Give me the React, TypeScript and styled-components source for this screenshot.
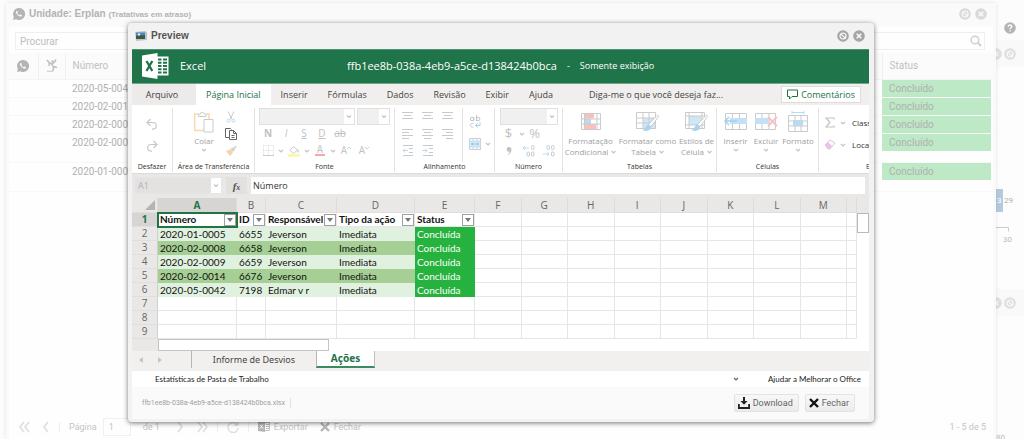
import React from "react";
import styled, { createGlobalStyle, css } from "styled-components";

const office = `"Open Sans", "Noto Sans", sans-serif`;
const calibri = `Lato, "Open Sans", sans-serif`;
const ui = `Roboto, "Liberation Sans", sans-serif`;

const GlobalStyle = createGlobalStyle`
  *, *::before, *::after { box-sizing: border-box; }
  html, body { margin: 0; padding: 0; }
  body { background: #fcfcfc; font-family: ${ui}; font-size: 10px; color: #b5b5b5; }
  button, input, select { font: inherit; color: inherit; margin: 0; padding: 0; border: 0; background: none; border-radius: 0; }
  svg { display: block; flex: none; }
`;

/* ---------- page behind the dialog ---------- */

const Page = styled.div`
  position: relative;
  display: flex;
  min-height: 100vh;
  padding-left: 6px;
  overflow: hidden;
`;

const BackWindow = styled.section`
  flex: 1;
  min-width: 0;
  display: flex;
  flex-direction: column;
  margin-top: 3px;
  padding: 0 3px;
  background: #fafafa;
  box-shadow: 0 0 4px rgba(0, 0, 0, 0.1);
  z-index: 1;
`;

const BackHeader = styled.header`
  display: flex;
  align-items: center;
  height: 24px;
  padding: 0 6px 2px 4px;
  gap: 4px;
`;

const BackTitle = styled.h2`
  margin: 0;
  flex: 1;
  font-size: 10px;
  line-height: 14px;
  font-weight: 700;
  font-family: "Liberation Sans", sans-serif;
  color: #b3b3b3;
  small { font-size: 8px; }
`;

const IconButton = styled.button`
  display: flex;
  align-items: center;
  justify-content: center;
`;

const BackBody = styled.div`
  flex: 1;
  display: flex;
  flex-direction: column;
  background: #fefefe;
`;

const SearchBox = styled.label`
  display: flex;
  align-items: center;
  height: 18px;
  margin: 5px 8px 3px 6px;
  padding: 0 2px 0 4px;
  border: 1px solid #efefef;
  input { flex: 1; min-width: 0; outline: 0; }
  input::placeholder { color: #bdbdbd; opacity: 1; }
`;

const BackTable = styled.table`
  width: 100%;
  table-layout: fixed;
  border-collapse: collapse;
  th {
    height: 26px;
    padding: 0 7px;
    background: #fbfbfb;
    border-left: 1px solid #f0f0f0;
    border-bottom: 1px solid #f4f4f4;
    font-weight: 400;
    text-align: left;
    color: #bfbfbf;
  }
  th:first-child { border-left: 0; }
`;

const IconHead = styled.div`
  display: flex;
  justify-content: center;
  margin: 0 -7px;
`;

const BackCell = styled.td<{ $tall?: boolean }>`
  height: ${(p) => (p.$tall ? 29 : 18)}px;
  padding: 0 2px 0 0;
  vertical-align: top;
  border-bottom: 1px solid #f8f8f8;
  line-height: 17px;
  color: #b0b0b0;
`;

const CellText = styled.div<{ $done?: boolean }>`
  padding-left: 7px;
  background: ${(p) => (p.$done ? "#bde9c6" : "transparent")};
`;

const Pager = styled.footer`
  display: flex;
  align-items: center;
  gap: 12px;
  height: 25px;
  margin-top: auto;
  padding: 0 7px 0 9px;
  font-size: 9px;
  color: #c4c4c4;
  input { width: 28px; height: 18px; padding-left: 5px; border: 1px solid #f0f0f0; margin: 0 0 0 6px; }
`;

const PagerLabel = styled.label`
  display: flex;
  align-items: center;
`;

const PagerTotal = styled.span`
  margin-right: 4px;
`;

const PagerRule = styled.span`
  width: 1px;
  height: 10px;
  margin: 0 -3px;
  background: #eee;
`;

const PagerAction = styled.button`
  display: flex;
  align-items: center;
  gap: 4px;
`;

const PagerCount = styled.span`
  margin-left: auto;
`;

const Rail = styled.aside`
  width: 28px;
  display: flex;
  flex-direction: column;
  background: #fdfdfd;
`;

const RailTop = styled.div`
  display: flex;
  align-items: flex-end;
  justify-content: center;
  height: 40px;
  padding-bottom: 6px;
  background: #fcfcfc;
`;

const RailHeader = styled.div`
  display: flex;
  align-items: center;
  gap: 2px;
  height: 27px;
  margin-left: -6px;
  background: #f9f9f9;
`;

const ChartEnd = styled.svg`
  margin-left: -2px;
`;

/* ---------- dialog ---------- */

const Overlay = styled.div`
  position: absolute;
  inset: 0;
  padding: 23px 150px 0 128px;
  z-index: 2;
`;

const Dialog = styled.section`
  background: #f2f2f2;
  border-radius: 4px;
  box-shadow: 0 1px 5px rgba(0, 0, 0, 0.55);
  padding: 0 5px 3px 4px;
`;

const DialogHeader = styled.header`
  display: flex;
  align-items: center;
  gap: 4px;
  height: 26px;
  padding: 0 4px 1px 3px;
  h1 { flex: 1; margin: 0; font-size: 10px; line-height: 14px; font-weight: 700; color: #555; font-family: "Liberation Sans", sans-serif; }
`;

const Workbook = styled.div`
  font-family: ${office};
  font-size: 9px;
  color: #444;
  overflow: hidden;
`;

const TitleBar = styled.div`
  display: flex;
  align-items: center;
  height: 35px;
  padding: 0 10px 2px;
  background: #1f7449;
  border-top: 1px solid #4c9170;
  border-bottom: 1px solid #6da88b;
  color: #fff;
  font-size: 11px;
  line-height: 16px;
  white-space: nowrap;
`;

const Brand = styled.div`
  display: flex;
  align-items: center;
  gap: 11px;
  width: 205px;
`;

const FileName = styled.span`
  font-weight: 500;
`;

const TitleNote = styled.span`
  padding-left: 10px;
  font-size: 9px;
  font-weight: 500;
`;

const Tabs = styled.nav`
  display: flex;
  height: 21px;
  background: #f1efed;
`;

const Tab = styled.button<{ $active?: boolean; $file?: boolean }>`
  padding: 0 10px;
  font-weight: 500;
  color: ${(p) => (p.$active ? "#217346" : "#444")};
  background: ${(p) => (p.$active ? "#fff" : "transparent")};
  white-space: nowrap;
  ${(p) => p.$file && css`width: 64px; padding: 0 4px 0 0; background: #ecebe9;`}
`;

const TellMe = styled.button`
  padding-left: 26px;
  white-space: nowrap;
`;

const CommentsButton = styled.button`
  display: flex;
  align-items: center;
  gap: 3px;
  height: 17px;
  margin: 2px 8px 0 auto;
  padding: 0 5px;
  background: #fff;
  border: 1px solid #dedddb;
  color: #217346;
  font-weight: 500;
`;

const Ribbon = styled.div`
  display: flex;
  height: 69px;
  padding: 3px 0 1px;
  background: #fff;
  border-bottom: 1px solid #dcdbda;
  overflow: hidden;
`;

const Group = styled.section<{ $w: number }>`
  flex: none;
  display: flex;
  flex-direction: column;
  width: ${(p) => p.$w}px;
  border-right: 1px solid #e3e3e3;
  &:last-child { border-right: 0; }
`;

const GroupBody = styled.div<{ $gap?: number; $start?: boolean }>`
  flex: 1;
  display: flex;
  justify-content: ${(p) => (p.$start ? "flex-start" : "center")};
  padding-left: ${(p) => (p.$start ? 2 : 0)}px;
  gap: ${(p) => p.$gap ?? 0}px;
`;

const GroupLabel = styled.h3`
  margin: 0;
  font-size: 7px;
  line-height: 10px;
  font-weight: 400;
  text-align: center;
  color: #333;
  white-space: nowrap;
`;

const Stack = styled.div<{ $gap?: number; $pad?: number }>`
  display: flex;
  flex-direction: column;
  gap: ${(p) => p.$gap ?? 0}px;
  padding-top: ${(p) => p.$pad ?? 0}px;
`;

const Line = styled.div<{ $gap?: number }>`
  display: flex;
  align-items: center;
  height: 17px;
  gap: ${(p) => p.$gap ?? 0}px;
`;

const Tool = styled.button<{ $w?: number; $big?: boolean }>`
  display: flex;
  align-items: center;
  justify-content: center;
  width: ${(p) => p.$w ?? 18}px;
  height: 17px;
  font-size: ${(p) => (p.$big ? 13 : 10)}px;
  line-height: 17px;
  color: #c2c2c2;
  white-space: nowrap;
`;

const BigTool = styled.button<{ $w: number }>`
  display: flex;
  flex-direction: column;
  align-items: center;
  width: ${(p) => p.$w}px;
  padding-top: 4px;
  color: #a0a0a0;
  font-size: 8px;
  line-height: 11px;
  white-space: nowrap;
`;

const BigIcon = styled.span`
  display: flex;
  align-items: center;
  height: 19px;
  margin-bottom: 4px;
`;

const Caption = styled.span`
  display: flex;
  align-items: center;
  gap: 3px;
  height: 11px;
`;

const Drop = styled.span<{ $w: number }>`
  position: relative;
  display: flex;
  width: ${(p) => p.$w}px;
  height: 17px;
  select {
    appearance: none;
    flex: 1;
    background: #f0f0f0;
    border: 1px solid #e0e0e0;
  }
  svg { position: absolute; right: 1px; top: 1px; background: #fff; }
`;

const InnerRule = styled.span`
  width: 1px;
  background: #e3e3e3;
  margin: 0 3px 0 4px;
`;

const EditText = styled.span`
  font-size: 8px;
  font-weight: 500;
  color: #333;
  white-space: nowrap;
`;

const EditLabel = styled(GroupLabel)`
  padding-left: 47px;
  text-align: left;
`;

const FormulaBar = styled.div`
  display: flex;
  gap: 4px;
  height: 24px;
  padding: 3px 4px 4px 2px;
  background: #e9e8e7;
  input { outline: 0; }
`;

const NameBox = styled.label`
  display: flex;
  width: 88px;
  background: #e3e2e1;
  border: 1px solid #e6e6e6;
  input { flex: 1; min-width: 0; padding-left: 3px; color: #b0b0b0; }
  svg { background: #fff; }
`;

const FxButton = styled.button`
  width: 21px;
  background: #e2e1e0;
  font-family: "Liberation Serif", serif;
  font-size: 11px;
  font-style: italic;
  font-weight: 700;
  color: #555;
  small { font-size: 8px; }
`;

const FormulaInput = styled.input`
  flex: 1;
  min-width: 0;
  background: #fff;
  padding-left: 2px;
  color: #333;
`;

const SheetArea = styled.div`
  display: flex;
  background: #fff;
`;

const SheetPane = styled.div`
  flex: 1;
  min-width: 0;
`;

const Sheet = styled.table`
  width: 100%;
  table-layout: fixed;
  border-collapse: separate;
  border-spacing: 0;
  font-family: ${calibri};
  font-size: 10px;
  line-height: 11px;
  color: #111;
`;

const ColHead = styled.th<{ $on?: boolean }>`
  height: 15px;
  padding: 0;
  background: ${(p) => (p.$on ? "#d6d5d3" : "#e9e8e7")};
  border-right: 1px solid #dddcdb;
  border-bottom: 1px solid ${(p) => (p.$on ? "#217346" : "#e0dfde")};
  font-family: ${office};
  font-weight: ${(p) => (p.$on ? 700 : 400)};
  color: ${(p) => (p.$on ? "#217346" : "#666")};
  svg { margin: 0 2px 0 auto; }
`;

const RowHead = styled.th<{ $on?: boolean }>`
  height: 14px;
  padding: 0;
  background: ${(p) => (p.$on ? "#d6d5d3" : "#e9e8e7")};
  border-right: 1px solid ${(p) => (p.$on ? "#217346" : "#d0cfce")};
  border-bottom: 1px solid #e0dfde;
  font-family: ${office};
  font-weight: ${(p) => (p.$on ? 700 : 400)};
  color: ${(p) => (p.$on ? "#217346" : "#666")};
`;

const Cell = styled.td<{ $bg?: string; $selected?: boolean; $light?: boolean }>`
  height: 14px;
  padding: 2px 0 0 2px;
  overflow: hidden;
  white-space: nowrap;
  border-right: 1px solid ${(p) => p.$bg ?? "#e6e6e6"};
  border-bottom: 1px solid ${(p) => p.$bg ?? "#e6e6e6"};
  background: ${(p) => p.$bg ?? "#fff"};
  color: ${(p) => (p.$light ? "#fff" : "#111")};
`;

const TitleCell = styled(Cell)`
  padding: 0 0 0 2px;
  ${(p) => p.$selected && css`outline: 2px solid #217346; outline-offset: -1px;`}
`;

const HeadCell = styled.div`
  display: flex;
  align-items: center;
  justify-content: space-between;
  height: 13px;
  font-weight: 700;
`;

const FilterButton = styled.button`
  flex: none;
  display: flex;
  align-items: center;
  justify-content: center;
  width: 12px;
  height: 12px;
  border: 1px solid #a0a0a0;
  background: #fff;
`;

const VScroll = styled.div`
  width: 12px;
  padding-top: 15px;
  background: linear-gradient(#e9e8e7 15px, #fff 15px);
`;

const VThumb = styled.div`
  height: 20px;
  background: #fff;
  border: 1px solid #b9b9b9;
`;

const HScroll = styled.div`
  display: flex;
  height: 12px;
  padding-left: 26px;
  background: linear-gradient(to right, #e9e8e7 26px, #fff 26px);
`;

const HThumb = styled.div`
  width: 171px;
  border: 1px solid #c4c4c4;
  background: #fff;
`;

const SheetTabs = styled.nav`
  display: flex;
  height: 20px;
  padding: 0 0 3px 7px;
  background: #f2f0ef;
`;

const SheetArrows = styled.div`
  display: flex;
  width: 52px;
`;

const SheetArrow = styled.button`
  width: 19px;
`;

const SheetTab = styled.button<{ $active?: boolean }>`
  width: ${(p) => (p.$active ? 59 : 125)}px;
  font-family: "Noto Sans", sans-serif;
  font-size: ${(p) => (p.$active ? 10 : 9)}px;
  line-height: 13px;
  color: #444;
  border-left: 1px solid #b5b5b5;
  ${(p) =>
    p.$active &&
    css`
      background: #fff;
      color: #217346;
      font-weight: 700;
      border-right: 1px solid #c0c0c0;
      border-bottom: 2px solid #3d8a62;
    `}
`;

const StatusBar = styled.div`
  display: flex;
  align-items: center;
  height: 16px;
  padding: 0 8px 0 23px;
  background: #fff;
  color: #222;
  font-family: ${calibri};
  font-size: 8px;
`;

const StatusButton = styled.button`
  font-weight: 400;
`;

const StatusChevron = styled.button`
  margin: 0 28px 0 auto;
`;

const DialogFooter = styled.footer`
  display: flex;
  align-items: center;
  gap: 6px;
  height: 32px;
  padding: 0 14px 0 10px;
  background: #fafafa;
`;

const FileLabel = styled.span`
  margin-right: auto;
  padding-right: 5px;
  border-right: 1px solid #e2e2e2;
  font-size: 7px;
  line-height: 10px;
  color: #a0a0a0;
`;

const FootButton = styled.button`
  display: flex;
  align-items: center;
  gap: 3px;
  height: 18px;
  padding: 0 5px 0 3px;
  border: 1px solid #e3e3e3;
  border-radius: 2px;
  background: linear-gradient(#f8f8f8, #ebebeb);
  color: #666;
  font-size: 9px;
`;

/* ---------- drawings ---------- */

const G = "#cbcbcb";
const B = "#b9dbf1";
const R = "#f9c0c0";

const Chev = ({ w = 8, h = 8, c = "#c4c4c4" }: { w?: number; h?: number; c?: string }) => (
  <svg width={w} height={h} viewBox={`0 0 ${w} ${h}`} fill="none" stroke={c} strokeWidth="1.2">
    <path d={`M${w / 2 - 2} ${h / 2 - 1}l2 2 2-2`} />
  </svg>
);

const Badge = ({ kind, c }: { kind: "ban" | "x" | "help"; c: string }) => (
  <svg width="12" height="12" viewBox="0 0 12 12">
    <circle cx="6" cy="6" r="5.8" fill={c} />
    {kind === "ban" && <g fill="none" stroke="#fafafa" strokeWidth="1.2"><circle cx="6" cy="6" r="3" /><path d="M3.9 3.9l4.200 4.200" /></g>}
    {kind === "x" && <path d="M3.7 3.7l4.6 4.6M8.3 3.7L3.7 8.3" stroke="#fafafa" strokeWidth="1.6" />}
    {kind === "help" && <g fill="none" stroke="#fafafa" strokeWidth="1.4"><path d="M4.2 4.8c0-2.4 3.6-2.3 3.6-.2 0 1.2-1.8 1.2-1.8 2.6" /><path d="M6 8.2v1.4" /></g>}
  </svg>
);

const WhatsApp = () => (
  <svg width="12" height="12" viewBox="0 0 24 24">
    <path d="M12 0a12 12 0 0 0-10.3 18L0 24l6.2-1.6A12 12 0 1 0 12 0z" fill="#b4b4b4" />
    <path d="M8.4 6.2c-.3-.6-.9-.5-1.4-.2-1.500 1.300-1.400 3.300-.2 5.200 1.700 2.700 3.800 4.700 7 5.800 1.800.6 3.700-.1 4.100-1.700.2-.8.100-1-.4-1.300l-2.300-1.100c-.4-.2-.7-.1-1 .3l-.9 1.100c-2.300-.9-3.700-2.200-4.800-4.200l.9-1.200c.2-.3.200-.6 0-1z" fill="#fafafa" />
  </svg>
);

const Runner = () => (
  <svg width="12" height="13" viewBox="0 0 12 13" fill="none" stroke="#bebebe" strokeWidth="1.500">
    <path d="M1 1l2.500 3L6 5l1.500 3.500L7 12M6 5l2.500-2L10 .5M7.200 7.500L11 8.500M3.500 4L3 7" />
    <circle cx="6.500" cy="2.500" r="1.200" fill="#bebebe" stroke="none" />
    <path d="M1 12.300h6" strokeWidth=".8" />
  </svg>
);

const Lens = () => (
  <svg width="12" height="12" viewBox="0 0 12 12" fill="none" stroke="#cfcfcf" strokeWidth="1.400">
    <circle cx="5" cy="5" r="3.800" /><path d="M8 8l3 3" strokeWidth="2" />
  </svg>
);

const Arrows = ({ d, n = 1 }: { d: 1 | -1; n?: number }) => (
  <svg width={n === 2 ? 12 : 8} height="12" viewBox={n === 2 ? "0 0 12 12" : "0 0 8 12"} fill="none" stroke="#dedede" strokeWidth="1.600">
    <path d={d < 0 ? "M6 1L2 6l4 5" : "M2 1l4 5-4 5"} />
    {n === 2 && <path d={d < 0 ? "M11 1L7 6l4 5" : "M7 1l4 5-4 5"} />}
  </svg>
);

const Refresh = () => (
  <svg width="12" height="12" viewBox="0 0 12 12" fill="none" stroke="#dcdcdc" strokeWidth="1.400">
    <path d="M10 3.500A5 5 0 1 0 11 7M10.800 .500v3.500H7.300" />
  </svg>
);

const Cross = ({ c, s = 10 }: { c: string; s?: number }) => (
  <svg width={s} height={s} viewBox="0 0 10 10" stroke={c} strokeWidth="2.400"><path d="M1 1l8 8M9 1L1 9" /></svg>
);

const SheetMini = () => (
  <svg width="12" height="11" viewBox="0 0 12 11">
    <path d="M6 1.500h5.500v8H6M8 3.500h3.500M8 5.500h3.500M8 7.500h3.500" fill="none" stroke="#c2c2c2" />
    <path d="M0 1l7-1v11l-7-1z" fill="#b5b5b5" /><path d="M2 3.500l3 4M5 3.500l-3 4" stroke="#fff" />
  </svg>
);

const PictureIcon = () => (
  <svg width="12" height="10" viewBox="0 0 12 10">
    <path d="M0 1l10-1 2 1v8l-11 1z" fill="#b8c4cf" />
    <path d="M1 1.500h9V8H1z" fill="#4e86c4" /><path d="M1 5c3-2 5 0 9-1v4H1z" fill="#46573c" />
    <circle cx="4" cy="3.500" r="1.300" fill="#dbe9f5" />
  </svg>
);

const ExcelLogo = () => (
  <svg width="27" height="26" viewBox="0 0 27 26">
    <path d="M14 3.500h12.500v19H14z" fill="#fff" />
    <path d="M16 5.500h3.500v2H16zM21 5.500h4v2h-4zM16 8.800h3.500v2H16zM21 8.800h4v2h-4zM16 12h3.500v2H16zM21 12h4v2h-4zM16 15.300h3.500v2H16zM21 15.300h4v2h-4zM16 18.500h3.500v2H16zM21 18.500h4v2h-4z" fill="#1f7449" />
    <path d="M0 2.500L15.500 0v26L0 23.500z" fill="#fff" />
    <path d="M4.500 8l5.800 10M10.300 8L4.500 18" stroke="#1f7449" strokeWidth="2.300" />
  </svg>
);

const Comment = () => (
  <svg width="11" height="11" viewBox="0 0 11 11" fill="none" stroke="#217346"><path d="M.5 1h10v6.500H5l-2.500 2.500V7.500h-2z" /></svg>
);

const Undo = ({ flip }: { flip?: boolean }) => (
  <svg width="12" height="12" viewBox="0 0 12 12" fill="none" stroke="#c6c6c6" strokeWidth="1.100">
    <g transform={flip ? "matrix(-1 0 0 1 12 0)" : undefined}><path d="M4.500 1L1 4.500 4.500 8M1 4.500h6a3.300 3.300 0 0 1 0 6.600H6" /></g>
  </svg>
);

const Paste = () => (
  <svg width="20" height="22" viewBox="0 0 20 22" fill="none">
    <path d="M10 19.500H.7V3h4M12 3h3v5" stroke="#fad9b0" strokeWidth="1.500" />
    <path d="M4.500 4.500V3h2a1.800 1.800 0 0 1 3.600 0h2v2.500H4.500z" fill="#fff" stroke={G} />
    <path d="M10 8.500h9v12.500h-9z" fill="#fff" stroke={G} />
  </svg>
);
const Scissors = () => (
  <svg width="10" height="12" viewBox="0 0 10 12" fill="none">
    <path d="M2 .5l4 8M8 .5l-4 8" stroke={G} /><circle cx="2.500" cy="9.700" r="1.500" stroke={B} /><circle cx="7.500" cy="9.700" r="1.500" stroke={B} />
  </svg>
);
const Copy = () => (
  <svg width="12" height="12" viewBox="0 0 12 12" fill="none" stroke="#666">
    <path d="M4.500 9.500h-4V.5h5l1 1" /><path d="M4.500 2.500h4l3 3v6h-7zM8.500 2.500v3h3M6.500 7.500h3M6.500 9.500h3" />
  </svg>
);
const Brush = () => (
  <svg width="12" height="12" viewBox="0 0 12 12"><path d="M1 6l4-1.500 3 3L5 11z" fill="#fad3a3" /><path d="M5 4l4-2 2-1.500.5 1L9 6 8 7z" fill="#d4d4d4" /></svg>
);
const Borders = () => (
  <svg width="11" height="11" viewBox="0 0 11 11" fill="none" stroke="#dadada"><path d="M.5.500h10M.5.500v10M10.500.500v10M5.500.500v10M.5 5.500h10" strokeDasharray="1 1" /><path d="M0 10.500h11" stroke={G} /></svg>
);
const Bucket = () => (
  <svg width="12" height="12" viewBox="0 0 12 12" fill="none"><path d="M5.500 1.500l4 3.500-4 3.500L2 5.500z" stroke={G} /><path d="M10 4.500v3" stroke={B} strokeWidth="1.500" /><path d="M0 10.500h12" stroke="#fbf7a0" strokeWidth="2.400" /></svg>
);
const UnderBar = styled.span`
  line-height: 9px;
  padding: 0 2px;
  border-bottom: 2px solid #f6a9a9;
`;
const Glyph = styled.span`
  line-height: 11px;
`;
const AlignIcon = ({ rows }: { rows: [number, number][] }) => (
  <svg width="11" height="11" viewBox="0 0 11 11" stroke="#c9c9c9">{rows.map(([x, w], i) => <path key={i} d={`M${x} ${i * 3 + 1.5}h${w}`} />)}</svg>
);
const Indent = ({ right }: { right?: boolean }) => (
  <svg width="11" height="11" viewBox="0 0 11 11" fill="none" stroke="#c9c9c9">
    <path d="M1 .5h10M7 3.500h4M7 7.500h4M1 10.500h10" /><path d={right ? "M0 5.500h5M3 3.500l2 2-2 2" : "M6 5.500H1M3 3.500l-2 2 2 2"} stroke={B} />
  </svg>
);
const Wrap = () => (
  <svg width="12" height="14" viewBox="0 0 12 14" fill="none" stroke="#c6c6c6">
    <circle cx="3" cy="4" r="1.700" /><path d="M4.800 2v4M7.500 0v6" /><circle cx="9.200" cy="4" r="1.700" /><path d="M4.500 8.500a2 2 0 1 0 0 3.500" /><path d="M11 7.500v3H6.500M8.500 8.500l-2 2 2 2" stroke="#9fceee" />
  </svg>
);
const Merge = () => (
  <svg width="12" height="12" viewBox="0 0 12 12" fill="none"><path d="M.5.500h11v11H.5zM4 .5v2M8 .5v2M4 9.500v2M8 9.500v2" stroke={G} /><path d="M.5 3h11v6H.5z" fill="#d8ecf9" stroke={B} /><path d="M2 6h8M4 4.500L2.500 6 4 7.500M8 4.500L9.500 6 8 7.500" stroke="#8fc4e8" /></svg>
);
const NumComma = () => (
  <svg width="8" height="10" viewBox="0 0 8 10"><path d="M4 1a2.300 2.300 0 1 0 .6 4.500C4.300 7 3.500 8 2 9c3-.5 4.500-3 4.500-5.200C6.500 2 5.500 1 4 1z" fill="#c2c2c2" /></svg>
);
const Decimal = ({ less }: { less?: boolean }) => (
  <svg width="12" height="12" viewBox="0 0 12 12" fill="none" stroke="#c9c9c9">
    {less ? <><rect x="4" y=".5" width="2.500" height="4" rx="1" /><rect x="8.500" y=".5" width="2.500" height="4" rx="1" /><rect x="8.500" y="7" width="2.500" height="4" rx="1" /><path d="M0 9h6M4 7l2 2-2 2" stroke={B} /></>
      : <><rect x="8.500" y=".5" width="2.500" height="4" rx="1" /><rect x="4" y="7" width="2.500" height="4" rx="1" /><rect x="8.500" y="7" width="2.500" height="4" rx="1" /><path d="M6 3H0M2 1L0 3l2 2" stroke={B} /></>}
  </svg>
);
const gridPath = "M.5.500h19v16h-19zM.5 6h19M.5 11h19M7 .5v16M13 .5v16";
const CondFormat = () => (
  <svg width="20" height="18" viewBox="0 0 20 18" fill="none"><path d="M4 .5h9v5H4zM4 11h11v5.500H4z" fill={R} /><path d="M4 6h6v5H4z" fill={B} /><path d="M.5.500h19v16h-19zM.5 6h19M.5 11h19M3.500 .5v16M16 .5v16" stroke={G} /></svg>
);
const Pen = () => (
  <><path d="M21 3.500l-8.500 9 2.500 2L22 5.500c1-1.500 0-2.700-1-2z" fill="#fff" stroke={G} /><path d="M12.500 12.500c-3 0-2 4-6 5.500 4 2 9 .5 8.700-3.500z" fill="#a9d4f0" /></>
);
const FormatTable = () => (
  <svg width="23" height="19" viewBox="0 0 23 19" fill="none"><path d="M7 6h13v10.500H7z" fill="#cfe6f6" /><path d={gridPath} stroke={G} /><Pen /></svg>
);
const CellStyles = () => (
  <svg width="23" height="19" viewBox="0 0 23 19" fill="none"><path d="M4 4h13v9H4z" fill="#cfe6f6" /><path d="M.5.500h19v16h-19zM.5 4h19M.5 13h19M4 .5v16M17 .5v16" stroke={G} /><Pen /></svg>
);
const InsertCells = () => (
  <svg width="24" height="17" viewBox="0 0 24 17" fill="none"><path d="M1.500.500h21v16h-21zM8.500.500v16M15.500.500v16" stroke={G} /><path d="M6 5h17v6H6z" fill="#c3e0f4" /><path d="M13 8H1M5 4L1 8l4 4" stroke="#a3d0ee" strokeWidth="1.500" /></svg>
);
const DeleteCells = () => (
  <svg width="23" height="17" viewBox="0 0 23 17" fill="none"><path d="M.5.500h20v16H.5zM7 .5v16M14 .5v16" stroke={G} /><path d="M0 5h13l2 3-2 3H0z" fill="#c3e0f4" /><path d="M13 4l9 9M22 4l-9 9" stroke={R} strokeWidth="1.800" /></svg>
);
const FormatCells = () => (
  <svg width="20" height="21" viewBox="0 -4 20 21" fill="none"><path d={gridPath} stroke={G} /><path d="M5 5h10v6H5z" fill="#b9dbf1" /><path d="M4 -2.500h12M4 -4v3M16 -4v3" stroke={B} /></svg>
);
const Sigma = () => (
  <svg width="10" height="11" viewBox="0 0 10 11" fill="none" stroke="#c2c2c2" strokeWidth="1.200"><path d="M9 2.500V1H1l4 4.500L1 10h8V8.500" /></svg>
);
const Eraser = () => (
  <svg width="12" height="11" viewBox="0 0 12 11"><path d="M1 6l5-5 5 3-5 6H4z" fill="#fff" stroke="#e3bfe6" /><path d="M1 6l3-3 4 4-2 3H4z" fill="#e6c4e8" /></svg>
);
const DownloadIcon = () => (
  <svg width="12" height="12" viewBox="0 0 12 12" fill="#222"><path d="M5 0h2v4h2.500L6 7.700 2.500 4H5zM0 7h1.800v3h8.400V7H12v5H0z" /></svg>
);

/* ---------- data ---------- */

const tasks = [
  { id: "2020-05-0042" },
  { id: "2020-02-0014" },
  { id: "2020-02-0009" },
  { id: "2020-02-0008", tall: true },
  { id: "2020-01-0005", tall: true },
];

const columns = ["A", "B", "C", "D", "E", "F", "G", "H", "I", "J", "K", "L", "M", ""];
const widths = [79, 29, 71, 78, 60];
const heads = ["Número", "ID", "Responsável", "Tipo da ação", "Status"];
const rows = [
  ["2020-01-0005", "6655", "Jeverson", "Imediata", "Concluída"],
  ["2020-02-0008", "6658", "Jeverson", "Imediata", "Concluída"],
  ["2020-02-0009", "6659", "Jeverson", "Imediata", "Concluída"],
  ["2020-02-0014", "6676", "Jeverson", "Imediata", "Concluída"],
  ["2020-05-0042", "7198", "Edmar v r", "Imediata", "Concluída"],
];
const empty = (n: number) => Array.from({ length: n }, (_, i) => <Cell key={`e${i}`} />);

const alignments: [string, [number, number][]][] = [
  ["Superior", [[0, 11], [2, 7], [0, 11]]],
  ["Meio", [[0, 11], [2, 7], [0, 11]]],
  ["Inferior", [[0, 11], [2, 7], [0, 11]]],
  ["Esquerda", [[0, 11], [0, 7], [0, 11], [0, 7]]],
  ["Centro", [[0, 11], [2, 7], [0, 11], [2, 7]]],
  ["Direita", [[0, 11], [4, 7], [0, 11], [4, 7]]],
];

const RibbonBar = () => (
  <Ribbon>
    <Group $w={41}>
      <GroupBody>
        <Stack $gap={5} $pad={7}>
          <Tool aria-label="Desfazer"><Undo /></Tool>
          <Tool aria-label="Refazer"><Undo flip /></Tool>
        </Stack>
      </GroupBody>
      <GroupLabel>Desfazer</GroupLabel>
    </Group>
    <Group $w={82}>
      <GroupBody $gap={1}>
        <BigTool $w={34}><BigIcon><Paste /></BigIcon><Caption>Colar</Caption><Chev /></BigTool>
        <Stack>
          <Tool aria-label="Recortar"><Scissors /></Tool>
          <Tool aria-label="Copiar"><Copy /></Tool>
          <Tool aria-label="Pincel"><Brush /></Tool>
        </Stack>
      </GroupBody>
      <GroupLabel>Área de Transferência</GroupLabel>
    </Group>
    <Group $w={140}>
      <GroupBody>
        <Stack>
          <Line $gap={2}>
            <Drop $w={96}><select aria-label="Fonte" /><Chev w={10} h={15} /></Drop>
            <Drop $w={33}><select aria-label="Tamanho" /><Chev w={10} h={15} /></Drop>
          </Line>
          <Line>
            <Tool><b>N</b></Tool><Tool><i>I</i></Tool><Tool><u>S</u></Tool><Tool><u>D</u></Tool><Tool><s>ab</s></Tool>
          </Line>
          <Line>
            <Tool aria-label="Bordas"><Borders /></Tool><Chev />
            <Tool aria-label="Preenchimento"><Bucket /></Tool><Chev />
            <Tool><UnderBar>A</UnderBar></Tool><Chev />
            <Tool><Glyph>A</Glyph><svg width="4" height="12" viewBox="0 0 4 12" fill="none" stroke={B}><path d="M0 4l2-2 2 2" /></svg></Tool>
            <Tool><Glyph>A</Glyph><svg width="4" height="12" viewBox="0 0 4 12" fill="none" stroke={B}><path d="M0 2l2 2 2-2" /></svg></Tool>
          </Line>
        </Stack>
      </GroupBody>
      <GroupLabel>Fonte</GroupLabel>
    </Group>
    <Group $w={100}>
      <GroupBody>
        <Stack>
          <Line>{alignments.slice(0, 3).map(([n, r]) => <Tool key={n} $w={20} aria-label={n}><AlignIcon rows={r} /></Tool>)}</Line>
          <Line>{alignments.slice(3).map(([n, r]) => <Tool key={n} $w={20} aria-label={n}><AlignIcon rows={r} /></Tool>)}</Line>
          <Line><Tool $w={20} aria-label="Diminuir recuo"><Indent /></Tool><Tool $w={20} aria-label="Aumentar recuo"><Indent right /></Tool></Line>
        </Stack>
        <InnerRule />
        <Stack $gap={5} $pad={5}>
          <Line><Tool aria-label="Quebrar texto"><Wrap /></Tool></Line>
          <Line><Tool aria-label="Mesclar"><Merge /></Tool><Chev /></Line>
        </Stack>
      </GroupBody>
      <GroupLabel>Alinhamento</GroupLabel>
    </Group>
    <Group $w={68}>
      <GroupBody>
        <Stack>
          <Line><Drop $w={58}><select aria-label="Formato de número" /><Chev w={10} h={15} /></Drop></Line>
          <Line><Tool $big>$</Tool><Chev /><Tool $big>%</Tool></Line>
          <Line $gap={2}><Tool aria-label="Separador de milhares"><NumComma /></Tool><Tool aria-label="Aumentar casas"><Decimal /></Tool><Tool aria-label="Diminuir casas"><Decimal less /></Tool></Line>
        </Stack>
      </GroupBody>
      <GroupLabel>Número</GroupLabel>
    </Group>
    <Group $w={154}>
      <GroupBody $gap={2}>
        <BigTool $w={52}><BigIcon><CondFormat /></BigIcon><Caption>Formatação</Caption><Caption>Condicional <Chev w={5} /></Caption></BigTool>
        <BigTool $w={58}><BigIcon><FormatTable /></BigIcon><Caption>Formatar como</Caption><Caption>Tabela <Chev w={5} /></Caption></BigTool>
        <BigTool $w={36}><BigIcon><CellStyles /></BigIcon><Caption>Estilos de</Caption><Caption>Célula <Chev w={5} /></Caption></BigTool>
      </GroupBody>
      <GroupLabel>Tabelas</GroupLabel>
    </Group>
    <Group $w={102}>
      <GroupBody>
        <BigTool $w={30}><BigIcon><InsertCells /></BigIcon><Caption>Inserir</Caption><Chev /></BigTool>
        <BigTool $w={31}><BigIcon><DeleteCells /></BigIcon><Caption>Excluir</Caption><Chev /></BigTool>
        <BigTool $w={33}><BigIcon><FormatCells /></BigIcon><Caption>Formato</Caption><Chev /></BigTool>
      </GroupBody>
      <GroupLabel>Células</GroupLabel>
    </Group>
    <Group $w={60}>
      <GroupBody $start $gap={5}>
        <Stack $gap={5} $pad={6}>
          <Line><Tool aria-label="Soma"><Sigma /></Tool><Chev /></Line>
          <Line><Tool aria-label="Limpar"><Eraser /></Tool><Chev /></Line>
        </Stack>
        <Stack $gap={5} $pad={6}>
          <Line><EditText>Class</EditText></Line>
          <Line><EditText>Loca</EditText></Line>
        </Stack>
      </GroupBody>
      <EditLabel>E</EditLabel>
    </Group>
  </Ribbon>
);

const SheetGrid = () => (
  <SheetArea>
    <SheetPane>
      <Sheet>
        <colgroup>
          <col width={26} />
          {columns.map((c, i) => <col key={i} width={i < 5 ? widths[i] : c ? undefined : 10} />)}
        </colgroup>
        <thead>
          <tr>
            <ColHead aria-label="Selecionar tudo"><svg width="10" height="10" viewBox="0 0 10 10"><path d="M10 0v10H0z" fill="#b5b4b3" /></svg></ColHead>
            {columns.map((c, i) => <ColHead key={i} $on={i === 0}>{c}</ColHead>)}
          </tr>
        </thead>
        <tbody>
          <tr>
            <RowHead $on>1</RowHead>
            {heads.map((h, i) => (
              <TitleCell key={h} $selected={i === 0}>
                <HeadCell>{h}<FilterButton aria-label={`Filtrar ${h}`}><svg width="6" height="4" viewBox="0 0 6 4"><path d="M0 0h6L3 4z" fill="#777" /></svg></FilterButton></HeadCell>
              </TitleCell>
            ))}
            {empty(9)}
          </tr>
          {rows.map((r, n) => (
            <tr key={n}>
              <RowHead>{n + 2}</RowHead>
              {r.map((v, i) => <Cell key={i} $light={i === 4} $bg={i === 4 ? "#26b23e" : n % 2 ? "#a5cf94" : "#e1f1e0"}>{v}</Cell>)}
              {empty(9)}
            </tr>
          ))}
          {[7, 8, 9].map((n) => <tr key={n}><RowHead>{n}</RowHead>{empty(14)}</tr>)}
        </tbody>
      </Sheet>
    </SheetPane>
    <VScroll><VThumb /></VScroll>
  </SheetArea>
);

export default function App() {
  return (
    <Page>
      <GlobalStyle />
      <BackWindow>
        <BackHeader>
          <WhatsApp />
          <BackTitle>Unidade: Erplan <small>(Tratativas em atraso)</small></BackTitle>
          <IconButton aria-label="Bloquear"><Badge kind="ban" c="#d9d9d9" /></IconButton>
          <IconButton aria-label="Fechar janela"><Badge kind="x" c="#d9d9d9" /></IconButton>
        </BackHeader>
        <BackBody>
          <SearchBox><input placeholder="Procurar" aria-label="Procurar" /><Lens /></SearchBox>
          <BackTable>
            <colgroup><col width={29} /><col width={27} /><col /><col width={111} /></colgroup>
            <thead>
              <tr>
                <th aria-label="WhatsApp"><IconHead><WhatsApp /></IconHead></th>
                <th aria-label="Acidente"><IconHead><Runner /></IconHead></th>
                <th>Número</th>
                <th>Status</th>
              </tr>
            </thead>
            <tbody>
              {tasks.map((t) => (
                <tr key={t.id}>
                  <BackCell $tall={t.tall} /><BackCell />
                  <BackCell><CellText>{t.id}</CellText></BackCell>
                  <BackCell><CellText $done>Concluído</CellText></BackCell>
                </tr>
              ))}
            </tbody>
          </BackTable>
          <Pager>
            <IconButton aria-label="Primeira"><Arrows d={-1} n={2} /></IconButton>
            <IconButton aria-label="Anterior"><Arrows d={-1} /></IconButton>
            <PagerRule />
            <PagerLabel>Página<input defaultValue="1" /></PagerLabel>
            <PagerTotal>de 1</PagerTotal>
            <IconButton aria-label="Próxima"><Arrows d={1} /></IconButton>
            <IconButton aria-label="Última"><Arrows d={1} n={2} /></IconButton>
            <PagerRule />
            <IconButton aria-label="Atualizar"><Refresh /></IconButton>
            <PagerRule />
            <PagerAction><SheetMini />Exportar</PagerAction>
            <PagerAction><Cross c="#b5b5b5" />Fechar</PagerAction>
            <PagerCount>1 - 5 de 5</PagerCount>
          </Pager>
        </BackBody>
      </BackWindow>

      <Rail>
        <RailTop><IconButton aria-label="Ajuda da página"><Badge kind="help" c="#b4b4b4" /></IconButton></RailTop>
        <RailHeader><Badge kind="x" c="#dedede" /><Badge kind="ban" c="#dedede" /></RailHeader>
        <ChartEnd width="30" height="222" viewBox="0 0 30 222">
          <path d="M0 122h9v23H0z" fill="#b5cade" />
          <text x="3" y="136" fontSize="8" fill="#fff">3</text>
          <text x="10" y="136" fontSize="8" fill="#b0b0b0">29</text>
          <path d="M0 160.500h14.500v4" fill="none" stroke="#ccc" />
          <text x="9" y="175" fontSize="8" fill="#bbb">30</text>
        </ChartEnd>
        <RailHeader><Badge kind="x" c="#dedede" /><Badge kind="ban" c="#dedede" /></RailHeader>
        <ChartEnd width="30" height="123" viewBox="0 0 30 123">
          <text x="2" y="124" fontSize="8" fill="#bbb">80</text>
        </ChartEnd>
      </Rail>

      <Overlay>
        <Dialog role="dialog" aria-label="Preview">
          <DialogHeader>
            <PictureIcon />
            <h1>Preview</h1>
            <IconButton aria-label="Bloquear preview"><Badge kind="ban" c="#a5a5a5" /></IconButton>
            <IconButton aria-label="Fechar preview"><Badge kind="x" c="#a5a5a5" /></IconButton>
          </DialogHeader>
          <Workbook>
            <TitleBar>
              <Brand><ExcelLogo />Excel</Brand>
              <FileName>ffb1ee8b-038a-4eb9-a5ce-d138424b0bca</FileName>
              <TitleNote>-</TitleNote>
              <TitleNote>Somente exibição</TitleNote>
            </TitleBar>
            <Tabs>
              <Tab $file>Arquivo</Tab>
              <Tab $active>Página Inicial</Tab>
              <Tab>Inserir</Tab>
              <Tab>Fórmulas</Tab>
              <Tab>Dados</Tab>
              <Tab>Revisão</Tab>
              <Tab>Exibir</Tab>
              <Tab>Ajuda</Tab>
              <TellMe>Diga-me o que você deseja faz...</TellMe>
              <CommentsButton><Comment />Comentários</CommentsButton>
            </Tabs>
            <RibbonBar />
            <FormulaBar>
              <NameBox><input defaultValue="A1" aria-label="Caixa de nome" /><Chev w={10} h={15} /></NameBox>
              <FxButton aria-label="Inserir função">f<small>x</small></FxButton>
              <FormulaInput defaultValue="Número" aria-label="Fórmula" />
            </FormulaBar>
            <SheetGrid />
            <HScroll><HThumb /></HScroll>
            <SheetTabs>
              <SheetArrows>
                <SheetArrow aria-label="Planilha anterior"><svg width="4" height="6" viewBox="0 0 4 6"><path d="M4 0v6L0 3z" fill="#c6c6c6" /></svg></SheetArrow>
                <SheetArrow aria-label="Próxima planilha"><svg width="4" height="6" viewBox="0 0 4 6"><path d="M0 0v6l4-3z" fill="#c6c6c6" /></svg></SheetArrow>
              </SheetArrows>
              <SheetTab>Informe de Desvios</SheetTab>
              <SheetTab $active>Ações</SheetTab>
            </SheetTabs>
            <StatusBar>
              <StatusButton>Estatísticas de Pasta de Trabalho</StatusButton>
              <StatusChevron aria-label="Mais opções"><Chev c="#666" /></StatusChevron>
              <StatusButton>Ajudar a Melhorar o Office</StatusButton>
            </StatusBar>
          </Workbook>
          <DialogFooter>
            <FileLabel>ffb1ee8b-038a-4eb9-a5ce-d138424b0bca.xlsx</FileLabel>
            <FootButton><DownloadIcon />Download</FootButton>
            <FootButton><Cross c="#111" />Fechar</FootButton>
          </DialogFooter>
        </Dialog>
      </Overlay>
    </Page>
  );
}
